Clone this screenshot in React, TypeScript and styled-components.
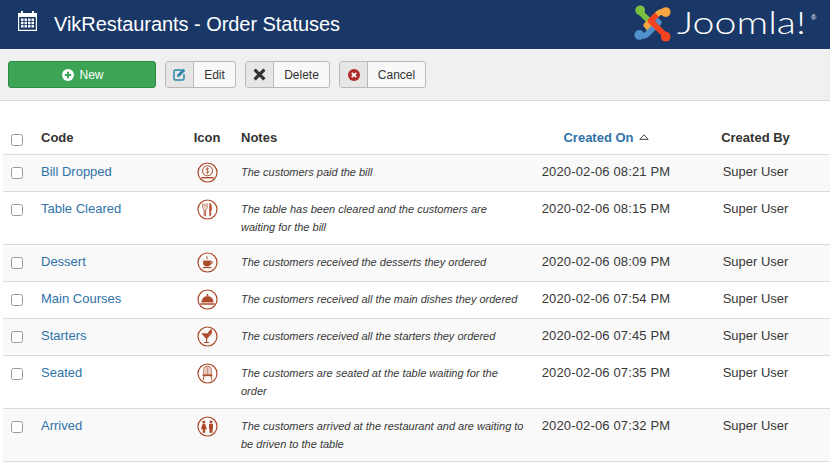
import { FC, ReactNode } from "react";
import styled, { createGlobalStyle } from "styled-components";

const GlobalStyle = createGlobalStyle`
	html, body {
		margin: 0;
		padding: 0;
		background: #fff;
		overflow: hidden;
	}
	body {
		font-family: "Liberation Sans", Arial, sans-serif;
		font-size: 13px;
		color: #383838;
	}
`;

const Page = styled.div`
	width: 830px;
	height: 470px;
	overflow: hidden;
`;

const Header = styled.header`
	height: 49px;
	background: #1a3867;
	display: flex;
	align-items: center;
	padding: 0 0 0 18px;
	color: #fff;
`;

const Title = styled.h1`
	margin: 0 0 1px 17px;
	font-size: 20px;
	font-weight: 400;
	letter-spacing: -0.05px;
	flex: 1;
`;

const Logo = styled.div`
	display: flex;
	align-items: center;
	gap: 5px;
	width: 197px;
	margin-bottom: 3px;
	position: relative;
`;

const Wordmark = styled.span`
	font-family: "Lato", "Open Sans", sans-serif;
	font-weight: 300;
	font-size: 31px;
	line-height: 36px;
	margin-bottom: 2px;
	transform: scaleX(1.27);
	transform-origin: left center;
	white-space: nowrap;
`;

const Reg = styled.span`
	position: absolute;
	left: 178px;
	top: 10px;
	font-size: 7px;
	line-height: 8px;
`;

const CalendarSvg = styled.svg`
	margin-bottom: 7px;
`;

const Toolbar = styled.div`
	height: 52px;
	box-sizing: border-box;
	background: #f0f0f0;
	border-bottom: 1px solid #d9d9d9;
	padding: 12px 0 0 8px;
	display: flex;
	align-items: flex-start;
	gap: 9px;
`;

const NewButton = styled.button`
	width: 148px;
	height: 27px;
	background: #3ca455;
	border: 1px solid #2f8a46;
	border-radius: 3px;
	color: #fff;
	font: 12px "Liberation Sans", Arial, sans-serif;
	display: flex;
	align-items: center;
	justify-content: center;
	gap: 5px;
	padding: 0 0 0 2px;
`;

const SplitButton = styled.button`
	height: 27px;
	background: #f8f8f8;
	border: 1px solid #b9b9b9;
	border-radius: 3px;
	color: #333;
	font: 12px "Liberation Sans", Arial, sans-serif;
	display: flex;
	align-items: stretch;
	padding: 0;
	overflow: hidden;
`;

const ButtonIcon = styled.span`
	width: 28px;
	box-sizing: border-box;
	background: #e6e6e6;
	border-right: 1px solid #b9b9b9;
	display: flex;
	align-items: center;
	justify-content: center;
`;

const ButtonLabel = styled.span<{ $width: number }>`
	width: ${p => p.$width}px;
	display: flex;
	align-items: center;
	justify-content: center;
`;

const TableWrap = styled.div`
	padding: 18px 0 0 3px;
`;

const Table = styled.table`
	width: 837px;
	table-layout: fixed;
	border-collapse: collapse;
	border-spacing: 0;
`;

const HeadCell = styled.th<{ $align?: string; $active?: boolean; $indent?: boolean }>`
	height: 35px;
	box-sizing: border-box;
	padding: 10px 0 6px ${p => (p.$indent ? 8 : 0)}px;
	font-size: 13px;
	line-height: 18px;
	font-weight: 700;
	text-align: ${p => p.$align || "left"};
	vertical-align: top;
	color: ${p => (p.$active ? "#2f72a8" : "#333")};
	border-bottom: 1px solid #dcdcdc;
`;

const Row = styled.tr<{ $odd: boolean }>`
	background: ${p => (p.$odd ? "#f9f9f9" : "#fff")};
	border-bottom: 1px solid #dcdcdc;
`;

const Cell = styled.td<{ $align?: string }>`
	padding: 8px 0;
	font-size: 13px;
	line-height: 18px;
	vertical-align: top;
	text-align: ${p => p.$align || "left"};
`;

const Check = styled.span<{ $head?: boolean }>`
	display: block;
	width: 10px;
	height: 10px;
	margin: ${p => (p.$head ? 5 : 4)}px 0 0 8px;
	background: #fff;
	border: 1px solid #9a9a9a;
	border-radius: 2.5px;
`;

const CodeLink = styled.a`
	color: #2f72a8;
	text-decoration: none;
`;

const Note = styled.span`
	display: block;
	width: 284px;
	margin-left: 8px;
	font-size: 11px;
	font-style: italic;
`;

const DateText = styled.span`
	letter-spacing: 0.15px;
`;

const IconBox = styled.span`
	display: block;
	height: 21px;
	margin-top: -1px;
	padding-left: 1px;
`;

const SortCaret = styled.svg`
	margin-left: 5px;
	position: relative;
	top: -2px;
`;

const RING = "#ac4a2c";

const StatusIcon: FC<{ children: ReactNode }> = ({ children }) => (
	<svg width="21" height="21" viewBox="0 0 21 21">
		<circle cx="10.5" cy="10.5" r="9.5" fill="none" stroke={RING} strokeWidth="1.2" />
		<g fill={RING} stroke={RING}>{children}</g>
	</svg>
);

const icons: Record<string, ReactNode> = {
	bill: (
		<>
			<circle cx="10.5" cy="8.800" r="5" fill="none" strokeWidth="1" />
			<path d="M12 6.800c-.8-.7-3-.7-3 .7 0 1.500 3 .6 3 2.200 0 1.300-2.300 1.300-3.100.5M10.500 5.300v7" fill="none" strokeWidth="0.7" />
			<path d="M4.200 15.700h12.600" fill="none" strokeWidth="1.400" />
		</>
	),
	table: (
		<>
			<path d="M5.800 4.500v4.100c0 1.100.7 1.700 1.400 1.900v6.200h1.400v-6.200c.7-.2 1.400-.8 1.400-1.900V4.500" fill="none" strokeWidth="0.9" />
			<path d="M7.900 4.500v4" fill="none" strokeWidth="0.8" />
			<path d="M12.400 3.800c2 1 2.600 4 2.300 7.500h-.8v5.400h-1.500z" strokeWidth="0.3" />
		</>
	),
	dessert: (
		<>
			<path d="M6.300 8.800h7.600v2.400c0 1.800-1.600 3-3.800 3s-3.800-1.200-3.800-3z" strokeWidth="0.3" />
			<path d="M13.800 9.600h1.100c1.100 0 1 2.300-1.400 2.500" fill="none" strokeWidth="0.9" />
			<path d="M5.800 15.500h8.600" fill="none" strokeWidth="1.200" />
			<path d="M10 4c-.9 1 .9 1.300 0 3.300" fill="none" strokeWidth="0.9" />
		</>
	),
	main: (
		<>
			<path d="M4.600 13.200c.2-3.800 2.600-6 5.900-6s5.700 2.200 5.900 6z" strokeWidth="0.3" />
			<circle cx="10.500" cy="5.900" r="1" strokeWidth="0" />
			<path d="M3.200 15h14.600" fill="none" strokeWidth="1.500" />
		</>
	),
	starters: (
		<>
			<path d="M4.600 7.400h10l-4.400 5-.6.200-.6-.2z" strokeWidth="0.4" />
			<path d="M9.600 12v4.300M7 16.500h5.200" fill="none" strokeWidth="1.100" />
			<path d="M11.600 7.400l3-3.800" fill="none" strokeWidth="1.700" />
			<circle cx="13.300" cy="6.200" r="1.600" strokeWidth="0" />
		</>
	),
	seated: (
		<>
			<path d="M6.800 11.500V6.800c0-2.300 1.700-3.700 3.700-3.700s3.700 1.400 3.700 3.700v4.700" fill="none" strokeWidth="0.9" />
			<path d="M9 4.200v7.300M10.500 3.800v7.700M12 4.200v7.300" fill="none" strokeWidth="0.6" />
			<path d="M5.800 11.400h9.400v1.700H5.800z" strokeWidth="0.2" />
			<path d="M7 13l-.8 4.200M14 13l.8 4.200" fill="none" strokeWidth="0.9" />
		</>
	),
	arrived: (
		<>
			<circle cx="6.800" cy="5.900" r="1.500" strokeWidth="0" />
			<circle cx="14" cy="5.900" r="1.500" strokeWidth="0" />
			<path d="M5.600 8h2.600l1.700 5.300H8.200v3.500H5.700v-3.500H3.900z" strokeWidth="0" />
			<path d="M12 8h4v5h-.5v3.800h-3V13H12z" strokeWidth="0" />
		</>
	),
};

const rows = [
	{ code: "Bill Dropped", icon: "bill", note: "The customers paid the bill", date: "2020-02-06 08:21 PM" },
	{ code: "Table Cleared", icon: "table", note: "The table has been cleared and the customers are waiting\u00a0for the bill", date: "2020-02-06 08:15 PM" },
	{ code: "Dessert", icon: "dessert", note: "The customers received the desserts they ordered", date: "2020-02-06 08:09 PM" },
	{ code: "Main Courses", icon: "main", note: "The customers received all the main dishes they ordered", date: "2020-02-06 07:54 PM" },
	{ code: "Starters", icon: "starters", note: "The customers received all the starters they ordered", date: "2020-02-06 07:45 PM" },
	{ code: "Seated", icon: "seated", note: "The customers are seated at the table waiting for the order", date: "2020-02-06 07:35 PM" },
	{ code: "Arrived", icon: "arrived", note: "The customers arrived at the restaurant and are waiting to be driven to the table", date: "2020-02-06 07:32 PM" },
];

const JoomlaMark: FC = () => (
	<svg width="39" height="37" viewBox="0 0 42 42">
		<g fill="none" strokeWidth="6.500" strokeLinecap="butt" strokeLinejoin="round">
			<path d="M6 7 L13 14 L23 24 L16 31" stroke="#7ac143" />
			<path d="M35 9 C30 6 27 10 24 13 L14 23 L21 30" stroke="#f9a541" />
			<path d="M7 34 C12 37 15 33 18 30 L28 20 L21 13" stroke="#5091cd" />
			<path d="M36 35 L29 28 L19 18 L26 11" stroke="#f44321" />
		</g>
		<circle cx="7" cy="6" r="5.500" fill="#7ac143" />
		<circle cx="36" cy="8" r="5.500" fill="#f9a541" />
		<circle cx="6" cy="34" r="5.500" fill="#5091cd" />
		<circle cx="36" cy="36" r="5.500" fill="#f44321" />
	</svg>
);

const CalendarIcon: FC = () => (
	<CalendarSvg width="19" height="20" viewBox="0 0 19 20">
		<path fill="#fff" d="M0 2h3V0h2v2h9V0h2v2h3v18H0z" />
		<rect x="1.200" y="6" width="16.600" height="12.800" fill="#1a3867" />
		<g fill="#fff">
			{[7.500, 10.800, 14.100].map(y =>
				[3, 6.500, 10, 13.500].map(x => <rect key={`${x}-${y}`} x={x} y={y} width="2.500" height="2.400" />)
			)}
		</g>
	</CalendarSvg>
);

export default function App() {
	return (
		<Page>
			<GlobalStyle />
			<Header>
				<CalendarIcon />
				<Title>VikRestaurants - Order Statuses</Title>
				<Logo>
					<JoomlaMark />
					<Wordmark>Joomla!</Wordmark>
					<Reg>®</Reg>
				</Logo>
			</Header>
			<Toolbar>
				<NewButton>
					<svg width="12" height="12" viewBox="0 0 12 12">
						<circle cx="6" cy="6" r="6" fill="#fff" />
						<path d="M6 2.800v6.400M2.800 6h6.400" stroke="#3ca455" strokeWidth="2" />
					</svg>
					New
				</NewButton>
				<SplitButton>
					<ButtonIcon>
						<svg width="13" height="13" viewBox="0 0 13 13">
							<path d="M9 2H2.500A1.500 1.500 0 0 0 1 3.500v7A1.500 1.500 0 0 0 2.500 12h7a1.500 1.500 0 0 0 1.500-1.500V6" fill="none" stroke="#2a87a8" strokeWidth="1.500" />
							<path d="M4.500 6.500 10.300 .8l2 2L6.500 8.500l-2.500.6z" fill="#2a87a8" />
						</svg>
					</ButtonIcon>
					<ButtonLabel $width={41}>Edit</ButtonLabel>
				</SplitButton>
				<SplitButton>
					<ButtonIcon>
						<svg width="13" height="13" viewBox="0 0 12 12">
							<path d="M1.500 1.500l9 9M10.500 1.500l-9 9" stroke="#333" strokeWidth="3" />
						</svg>
					</ButtonIcon>
					<ButtonLabel $width={55}>Delete</ButtonLabel>
				</SplitButton>
				<SplitButton>
					<ButtonIcon>
						<svg width="12" height="12" viewBox="0 0 12 12">
							<circle cx="6" cy="6" r="6" fill="#b02a2a" />
							<path d="M3.800 3.800l4.400 4.400M8.200 3.800l-4.400 4.400" stroke="#fff" strokeWidth="1.800" />
						</svg>
					</ButtonIcon>
					<ButtonLabel $width={57}>Cancel</ButtonLabel>
				</SplitButton>
			</Toolbar>
			<TableWrap>
				<Table>
					<colgroup>
						<col width="38" />
						<col width="140" />
						<col width="52" />
						<col width="308" />
						<col width="130" />
						<col width="169" />
					</colgroup>
					<thead>
						<tr>
							<HeadCell><Check $head /></HeadCell>
							<HeadCell>Code</HeadCell>
							<HeadCell $align="center">Icon</HeadCell>
							<HeadCell $indent>Notes</HeadCell>
							<HeadCell $align="center" $active>
								Created On
								<SortCaret width="10" height="6" viewBox="0 0 10 6">
									<path d="M.8 5.400 5 .8l4.200 4.600z" fill="none" stroke="#333" strokeWidth="0.9" />
								</SortCaret>
							</HeadCell>
							<HeadCell $align="center">Created By</HeadCell>
						</tr>
					</thead>
					<tbody>
						{rows.map((row, index) => (
							<Row key={row.code} $odd={index % 2 === 0}>
								<Cell><Check /></Cell>
								<Cell><CodeLink href="#">{row.code}</CodeLink></Cell>
								<Cell $align="center">
									<IconBox><StatusIcon>{icons[row.icon]}</StatusIcon></IconBox>
								</Cell>
								<Cell><Note>{row.note}</Note></Cell>
								<Cell $align="center"><DateText>{row.date}</DateText></Cell>
								<Cell $align="center">Super User</Cell>
							</Row>
						))}
					</tbody>
				</Table>
			</TableWrap>
		</Page>
	);
}
